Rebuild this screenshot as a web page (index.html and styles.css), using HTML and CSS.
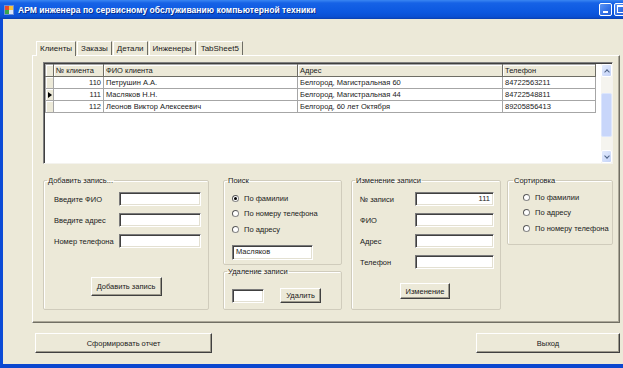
FILE: index.html
```html
<!DOCTYPE html>
<html>
  <head>
    <meta charset="utf-8">
    <title>АРМ инженера</title>
    <link rel="stylesheet" href="styles.css">
  </head>
  <body>
    <div class="window">
      <div class="titlebar">
        <svg class="app-icon" width="10" height="10" viewBox="0 0 10 10">
          <rect x="0" y="0" width="10" height="10" fill="#6b8fd8"/>
          <rect x="1" y="1" width="4" height="4" fill="#e84b2c"/>
          <rect x="5" y="1" width="4" height="4" fill="#f4c33a"/>
          <rect x="1" y="5" width="4" height="4" fill="#3aa54a"/>
          <rect x="5" y="5" width="4" height="4" fill="#d9e4f7"/>
        </svg>
        <span class="title">АРМ инженера по сервисному обслуживанию компьютерной техники</span>
        <div class="caption-buttons">
          <span class="cap-btn"><span class="min-glyph"></span></span>
          <span class="cap-btn"><span class="max-glyph"></span></span>
        </div>
      </div>

      <div class="client">
        <div class="tabs">
          <span class="tab active">Клиенты</span>
          <span class="tab">Заказы</span>
          <span class="tab">Детали</span>
          <span class="tab">Инженеры</span>
          <span class="tab">TabSheet5</span>
        </div>

        <div class="tabpage">
          <div class="grid">
            <table class="data">
              <colgroup>
                <col class="c-ind"><col class="c-num"><col class="c-fio"><col class="c-addr"><col class="c-tel">
              </colgroup>
              <tr class="head">
                <th class="ind"></th><th>№ клиента</th><th>ФИО клиента</th><th>Адрес</th><th>Телефон</th>
              </tr>
              <tr>
                <td class="ind"></td><td class="num">110</td><td>Петрушин А.А.</td><td>Белгород, Магистральная 60</td><td>84722563211</td>
              </tr>
              <tr>
                <td class="ind"><span class="pointer"></span></td><td class="num">111</td><td>Масляков Н.Н.</td><td>Белгород, Магистральная 44</td><td>84722548811</td>
              </tr>
              <tr>
                <td class="ind"></td><td class="num">112</td><td>Леонов Виктор Алексеевич</td><td>Белгород, 60 лет Октября</td><td>89205856413</td>
              </tr>
            </table>
            <div class="vscroll">
              <span class="sb-btn"><span class="chev up"></span></span>
              <div class="sb-track"><span class="sb-thumb"></span></div>
              <span class="sb-btn"><span class="chev down"></span></span>
            </div>
          </div>

          <div class="groups">
            <fieldset class="box box-add">
              <legend>Добавить запись...</legend>
              <div class="form form-add">
                <label>Введите ФИО</label><span class="edit"></span>
                <label>Введите адрес</label><span class="edit"></span>
                <label>Номер телефона</label><span class="edit"></span>
              </div>
              <div class="center"><button class="btn btn-add">Добавить запись</button></div>
            </fieldset>

            <div class="col-mid">
              <fieldset class="box box-search">
                <legend>Поиск</legend>
                <div class="radios">
                  <div class="radio"><span class="dot checked"></span>По фамилии</div>
                  <div class="radio"><span class="dot"></span>По номеру телефона</div>
                  <div class="radio"><span class="dot"></span>По адресу</div>
                </div>
                <span class="edit edit-search">Масляков</span>
              </fieldset>
              <fieldset class="box box-del">
                <legend>Удаление записи</legend>
                <div class="del-row">
                  <span class="edit edit-del"></span>
                  <button class="btn btn-del">Удалить</button>
                </div>
              </fieldset>
            </div>

            <fieldset class="box box-edit">
              <legend>Изменение записи</legend>
              <div class="form form-edit">
                <label>№ записи</label><span class="edit right">111</span>
                <label>ФИО</label><span class="edit"></span>
                <label>Адрес</label><span class="edit"></span>
                <label>Телефон</label><span class="edit"></span>
              </div>
              <div class="center"><button class="btn btn-edit">Изменение</button></div>
            </fieldset>

            <fieldset class="box box-sort">
              <legend>Сортировка</legend>
              <div class="radios">
                <div class="radio"><span class="dot"></span>По фамилии</div>
                <div class="radio"><span class="dot"></span>По адресу</div>
                <div class="radio"><span class="dot"></span>По номеру телефона</div>
              </div>
            </fieldset>
          </div>
        </div>

        <div class="footer">
          <button class="btn btn-report">Сформировать отчет</button>
          <button class="btn btn-exit">Выход</button>
        </div>
      </div>
    </div>
  </body>
</html>
```

FILE: styles.css
```css
/* Reset */
* {
  margin: 0;
  padding: 0;
  box-sizing: border-box;
}

body {
  font-family: "Liberation Sans", Arial, sans-serif;
  font-size: 7.5px;
  color: #1a1a1a;
  background: #0a4fd8;
  width: 623px;
  height: 368px;
  overflow: hidden;
}

/* Window frame */
.window {
  width: 623px;
  height: 368px;
  background: #ece9d8;
  border-left: 3px solid #0b4bd6;
  border-bottom: 4px solid #0b47cf;
  display: flex;
  flex-direction: column;
}

.titlebar {
  height: 19px;
  margin-left: -3px;
  background: linear-gradient(#3a86f2 0, #1662e6 3px, #0c58e0 12px, #0a4fd2 17px, #0a3fae 19px);
  display: flex;
  align-items: center;
  padding-left: 4px;
  color: #fff;
}

.app-icon {
  flex: none;
}

.title {
  margin-left: 4px;
  font-weight: bold;
  font-size: 8.5px;
  letter-spacing: 0.05px;
  text-shadow: 1px 1px 0 #0a2e8a;
  white-space: nowrap;
}

.caption-buttons {
  margin-left: auto;
  display: flex;
  gap: 2px;
  margin-right: -4px;
}

.cap-btn {
  width: 13px;
  height: 13px;
  border: 1px solid #fff;
  border-radius: 2px;
  background: linear-gradient(135deg, #5d95f4, #2f6ee6 60%, #2a5fd0);
  display: flex;
  align-items: flex-end;
  justify-content: flex-start;
  padding: 2px;
}

.min-glyph {
  width: 5px;
  height: 2px;
  background: #fff;
  margin-left: 1px;
}

.max-glyph {
  width: 8px;
  height: 8px;
  border: 1px solid #fff;
  border-top-width: 2px;
}

/* Client area */
.client {
  flex: 1;
  display: flex;
  flex-direction: column;
}

.tabs {
  display: flex;
  align-items: flex-end;
  margin: 22px 0 0 33px;
  height: 14px;
  position: relative;
  z-index: 1;
}

.tab {
  height: 14px;
  line-height: 13px;
  padding: 0 3px;
  font-size: 8px;
  border-top: 1px solid #fff;
  border-left: 1px solid #fff;
  border-right: 1px solid #6e6d65;
  margin-right: 1px;
}

.tab.active {
  height: 15px;
  margin-bottom: -1px;
  background: #ece9d8;
}

.tabpage {
  margin-left: 29px;
  width: 588px;
  height: 268px;
  border-top: 1px solid #fff;
  border-left: 1px solid #fff;
  border-right: 1px solid #716f64;
  border-bottom: 1px solid #716f64;
  box-shadow: inset -1px -1px 0 #aca899;
  padding: 6px 6px 0 10px;
}

/* Data grid */
.grid {
  width: 570px;
  height: 102px;
  background: #fff;
  border-top: 1px solid #808080;
  border-left: 1px solid #808080;
  border-bottom: 1px solid #f4f3ee;
  border-right: 1px solid #f4f3ee;
  box-shadow: inset 1px 1px 0 #404040;
  display: flex;
  justify-content: space-between;
  padding: 1px 0 0 1px;
}

.data {
  border-collapse: collapse;
  table-layout: fixed;
  width: 550px;
  height: 48px;
}

.c-ind { width: 8px; }
.c-num { width: 50px; }
.c-fio { width: 194px; }
.c-addr { width: 205px; }
.c-tel { width: 93px; }

.data tr {
  height: 12px;
}

.data th,
.data td {
  border: 1px solid #a6a6a6;
  padding: 0 2px;
  line-height: 10px;
  text-align: left;
  font-weight: normal;
  white-space: nowrap;
  overflow: hidden;
}

.data th {
  background: #ece9d8;
  box-shadow: inset 1px 1px 0 #fff;
  border-bottom-color: #6e6d65;
  border-right-color: #6e6d65;
}

.data td.ind,
.data th.ind {
  background: #ece9d8;
  padding: 0;
  box-shadow: inset 1px 1px 0 #fff;
}

.data td.num {
  text-align: right;
}

.pointer {
  display: block;
  width: 0;
  height: 0;
  margin-left: 2px;
  border-left: 4px solid #000;
  border-top: 3px solid transparent;
  border-bottom: 3px solid transparent;
}

.vscroll {
  width: 11px;
  display: flex;
  flex-direction: column;
  background: #f5f4ef;
}

.sb-btn {
  height: 13px;
  background: linear-gradient(135deg, #e4ecfd, #c4d3f8);
  border: 1px solid #fff;
  border-radius: 2px;
  display: flex;
  align-items: center;
  justify-content: center;
}

.chev {
  width: 4px;
  height: 4px;
  border-left: 1.5px solid #4d6185;
  border-top: 1.5px solid #4d6185;
}

.chev.up {
  transform: rotate(45deg);
  margin-top: 2px;
}

.chev.down {
  transform: rotate(225deg);
  margin-bottom: 2px;
}

.sb-track {
  flex: 1;
  padding-top: 16px;
}

.sb-thumb {
  display: block;
  height: 44px;
  background: #c8d6fa;
  border: 1px solid #dce6fd;
  border-radius: 2px;
}

/* Group boxes */
.groups {
  display: flex;
  align-items: stretch;
  height: 134px;
  margin-top: 12px;
}

.box {
  border: 1px solid #d0ccbc;
  border-radius: 2px;
  box-shadow: inset 1px 1px 0 #fff;
}

.box legend {
  font-size: 7.5px;
  line-height: 9px;
  padding: 0 1px;
}

.box-add {
  width: 166px;
  padding: 7px 0 0 10px;
}

.box-add legend {
  margin-left: -7px;
}

.col-mid {
  display: flex;
  flex-direction: column;
  gap: 2px;
  margin-left: 14px;
  width: 119px;
}

.box-search {
  height: 89px;
  padding: 7px 0 0 8px;
}

.box-search legend,
.box-del legend,
.box-edit legend {
  margin-left: -5px;
}

.box-del {
  flex: 1;
  padding: 12px 0 0 8px;
}

.box-edit {
  width: 150px;
  margin-left: 9px;
  padding: 7px 0 0 8px;
}

.box-sort {
  width: 106px;
  margin-left: 6px;
  align-self: flex-start;
  height: 69px;
  padding: 6px 0 0 15px;
}

.box-sort legend {
  margin-left: -10px;
}

.form {
  display: grid;
  align-items: center;
  row-gap: 7px;
}

.form-add {
  grid-template-columns: 65px 82px;
}

.form-edit {
  grid-template-columns: 55px 79px;
}

.form label {
  line-height: 9px;
}

.edit {
  display: block;
  height: 14px;
  background: #fff;
  border-top: 1px solid #7a7a7a;
  border-left: 1px solid #7a7a7a;
  border-bottom: 1px solid #fff;
  border-right: 1px solid #fff;
  box-shadow: inset 1px 1px 0 #404040, inset -1px -1px 0 #e3e0d2;
  line-height: 12px;
  padding: 0 3px;
}

.edit.right {
  text-align: right;
}

.center {
  display: flex;
  justify-content: center;
  padding-right: 10px;
}

.btn {
  font-family: inherit;
  font-size: 7.5px;
  color: #1a1a1a;
  background: #ece9d8;
  border-top: 1px solid #fff;
  border-left: 1px solid #fff;
  border-right: 1px solid #404040;
  border-bottom: 1px solid #404040;
  box-shadow: inset -1px -1px 0 #9d9a8c;
}

.btn-add {
  width: 71px;
  height: 19px;
  margin-top: 29px;
}

.btn-edit {
  width: 50px;
  height: 16px;
  margin-top: 14px;
}

.radios {
  display: flex;
  flex-direction: column;
  gap: 3.5px;
}

.radio {
  display: flex;
  align-items: center;
  height: 12px;
}

.dot {
  width: 7px;
  height: 7px;
  border-radius: 50%;
  background: #fff;
  border: 1px solid #8a8a8a;
  border-top-color: #5a5a5a;
  border-left-color: #5a5a5a;
  margin-right: 5px;
  display: flex;
  align-items: center;
  justify-content: center;
}

.dot.checked::after {
  content: "";
  width: 3px;
  height: 3px;
  border-radius: 50%;
  background: #000;
}

.edit-search {
  width: 81px;
  height: 15px;
  margin-top: 10px;
}

.del-row {
  display: flex;
  align-items: center;
}

.edit-del {
  width: 32px;
}

.btn-del {
  width: 41px;
  height: 15px;
  margin-left: 16px;
}

/* Footer buttons */
.footer {
  display: flex;
  justify-content: space-between;
  margin: 10px 3px 0 32px;
}

.btn-report {
  width: 177px;
  height: 20px;
}

.btn-exit {
  width: 144px;
  height: 20px;
}
```
